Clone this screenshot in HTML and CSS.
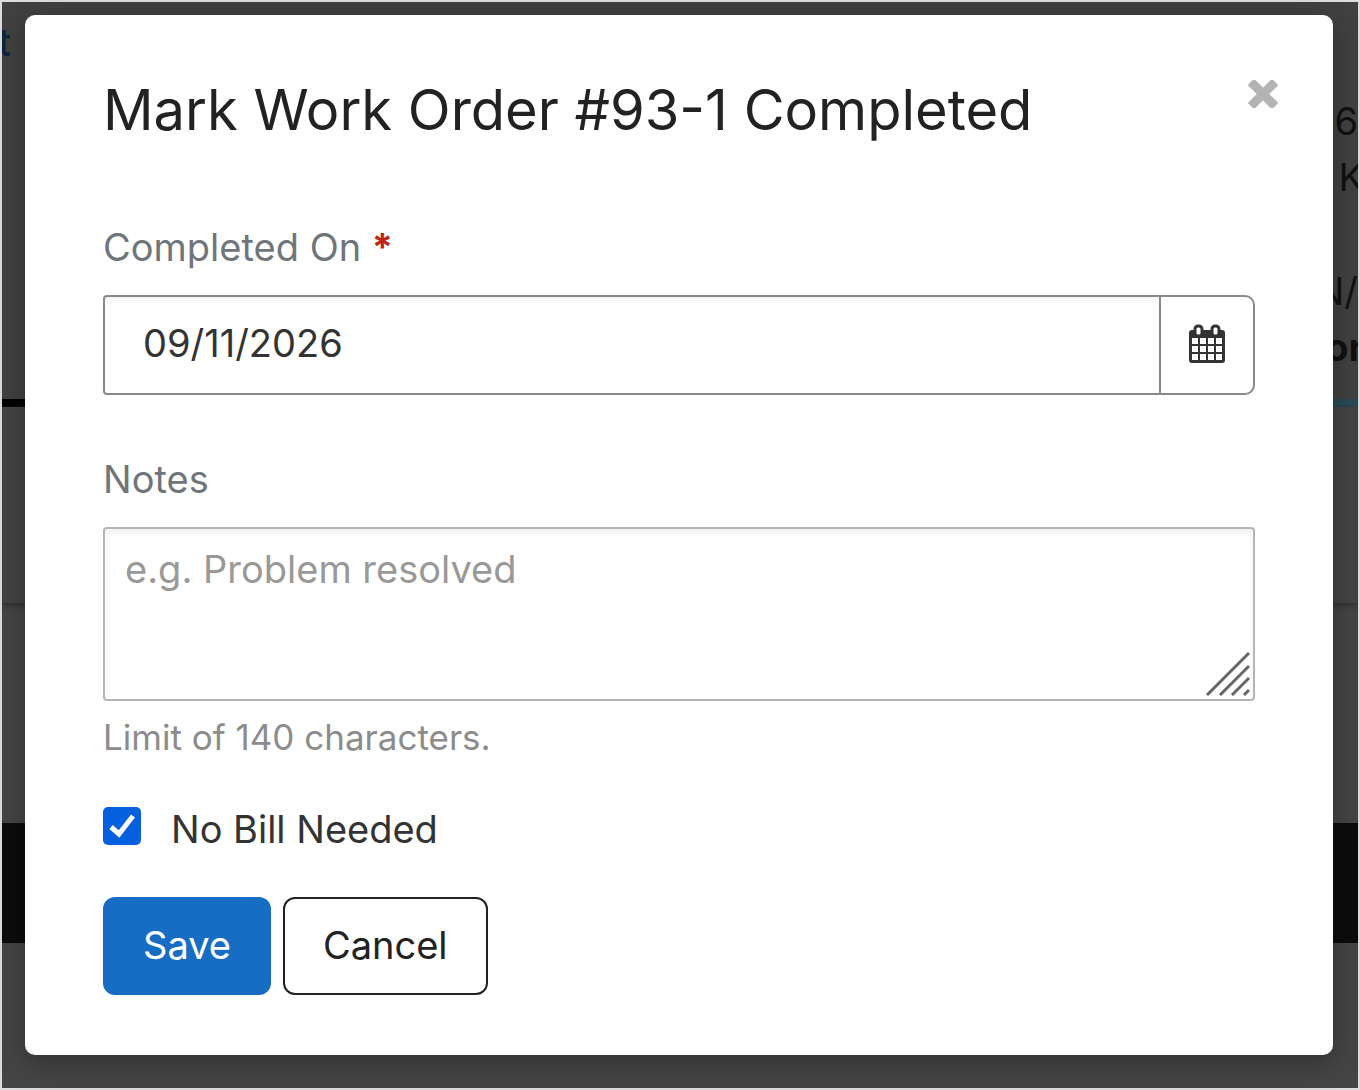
FILE: index.html
```html
<!DOCTYPE html>
<html lang="en">
<head>
<meta charset="utf-8">
<meta name="viewport" content="width=device-width, initial-scale=1">
<title>Mark Work Order #93-1 Completed</title>
<link rel="stylesheet" href="styles.css">
</head>
<body>
<div class="page">
  <div class="summary">
    <a class="summary-link" href="#">t</a>
    <div class="details">
      <span>6</span>
      <span class="cut">K</span>
      <span class="gap"></span>
      <span>N/</span>
      <strong class="cut">or</strong>
    </div>
  </div>
  <div class="rule"><span class="rule-dark"></span><span class="rule-teal"></span></div>
  <div class="panel"></div>
  <div class="blank"></div>
  <div class="footer-bar"></div>
</div>

<div class="overlay">
  <section class="modal" role="dialog" aria-labelledby="title">
    <header class="modal-header">
      <h1 class="title" id="title">Mark Work Order #93-1 Completed</h1>
      <button class="close" type="button" aria-label="Close">
        <svg width="30" height="28" viewBox="0 0 30 28"><path d="M6 5L24 23M24 5L6 23" stroke="#b3b3b3" stroke-width="9" stroke-linecap="square"/></svg>
      </button>
    </header>
    <form class="form">
      <label class="label" for="completed">Completed On <span class="required">*</span></label>
      <div class="date-group">
        <input class="date-input" id="completed" type="text" value="09/11/2026">
        <button class="date-button" type="button" aria-label="Open calendar">
          <svg width="36" height="40" viewBox="0 0 36 40">
            <rect x="0" y="6" width="36" height="33" rx="3" fill="#333"/>
            <g fill="#fff">
              <path d="M3 14h6v6H3zM11 14h6v6h-6zM19 14h6v6h-6zM27 14h6v6h-6z"/>
              <path d="M3 22h6v6H3zM11 22h6v6h-6zM19 22h6v6h-6zM27 22h6v6h-6z"/>
              <path d="M3 30h6v6H3zM11 30h6v6h-6zM19 30h6v6h-6zM27 30h6v6h-6z"/>
            </g>
            <g fill="#fff" stroke="#333" stroke-width="3">
              <rect x="6" y="2" width="7" height="10" rx="3"/>
              <rect x="23" y="2" width="7" height="10" rx="3"/>
            </g>
          </svg>
        </button>
      </div>
      <label class="label" for="notes">Notes</label>
      <div class="notes-group">
        <textarea class="notes" id="notes" placeholder="e.g. Problem resolved"></textarea>
        <svg class="grip" width="44" height="44" viewBox="0 0 44 44"><path d="M1 43L43 1M14 43L43 14M26 43L43 26M38 43L43 38" stroke="#666" stroke-width="3"/></svg>
      </div>
      <p class="hint">Limit of 140 characters.</p>
      <label class="check-row">
        <span class="check-wrap">
          <input class="check" type="checkbox" checked>
          <svg class="tick" width="38" height="38" viewBox="0 0 38 38"><path d="M8 20L16 27L30 9" fill="none" stroke="#fff" stroke-width="5"/></svg>
        </span>
        <span>No Bill Needed</span>
      </label>
      <div class="actions">
        <button class="button save" type="button">Save</button>
        <button class="button cancel" type="button">Cancel</button>
      </div>
    </form>
  </section>
</div>
</body>
</html>
```
FILE: styles.css
```css
* {
  box-sizing: border-box;
}

body {
  margin: 0;
  font-family: Inter, "Liberation Sans", sans-serif;
  font-size: 38px;
  line-height: 56px;
  color: #333;
}

button,
input,
textarea {
  font: inherit;
  color: inherit;
}

/* Dimmed page behind the dialog */
.page {
  display: flex;
  flex-direction: column;
  min-height: 100vh;
  overflow: hidden;
  border: 2px solid #dcdcdc;
  background: #454545;
}

.summary {
  display: flex;
  justify-content: space-between;
  height: 397px;
  padding-top: 12px;
  background: #414141;
}

.summary-link {
  margin-left: -4px;
  font-weight: 500;
  color: #10233f;
  text-decoration: none;
}

.details {
  display: flex;
  flex-direction: column;
  align-items: flex-end;
  padding-top: 79px;
  color: #111;
}

.cut {
  margin-right: -6px;
}

.gap {
  height: 58px;
}

.rule {
  display: flex;
  height: 8px;
}

.rule-dark,
.rule-teal {
  flex: 1;
}

.rule-dark {
  background: #000;
}

.rule-teal {
  background: #2a4c56;
}

.panel {
  height: 196px;
  background: #444;
  box-shadow: 0 2px 6px #2b2b2b;
}

.blank {
  height: 220px;
}

.footer-bar {
  height: 120px;
  background: #0c0c0c;
}

/* Dialog */
.overlay {
  position: absolute;
  inset: 0;
  padding: 15px 27px 35px 25px;
}

.modal {
  padding: 61px 78px 60px;
  border-radius: 10px;
  background: #fff;
  box-shadow: 0 8px 30px rgba(0, 0, 0, 0.3);
}

.modal-header {
  display: flex;
  align-items: flex-start;
  justify-content: space-between;
  margin-right: -23px;
}

.title {
  margin: 0;
  font-size: 56px;
  font-weight: 400;
  line-height: 68px;
  color: #222;
}

.close {
  display: flex;
  margin: 4px 0 0;
  padding: 0;
  border: 0;
  background: none;
}

.form {
  display: flex;
  flex-direction: column;
  padding-top: 75px;
}

.label {
  color: #70757a;
}

.required {
  font-weight: 700;
  color: #bd2413;
}

.date-group {
  display: flex;
  height: 100px;
  margin: 20px 0 56px;
  border: 2px solid #8a8a8a;
  border-radius: 4px 10px 10px 4px;
}

.date-input {
  flex: 1;
  min-width: 0;
  padding: 0 38px 4px;
  border: 0;
  background: none;
  box-shadow: inset 0 4px 6px rgba(0, 0, 0, 0.04);
}

.date-button {
  display: flex;
  align-items: center;
  justify-content: center;
  width: 94px;
  padding: 0 0 2px;
  border: 0;
  border-left: 2px solid #8a8a8a;
  background: none;
}

.notes-group {
  position: relative;
  display: flex;
  margin-top: 20px;
}

.notes {
  width: 100%;
  height: 174px;
  padding: 12px 20px;
  border: 2px solid #b5b5b5;
  border-radius: 4px;
  background: none;
  box-shadow: inset 0 4px 6px rgba(0, 0, 0, 0.06);
  resize: none;
}

.notes::placeholder {
  color: #999;
  opacity: 1;
}

.grip {
  position: absolute;
  right: 5px;
  bottom: 5px;
}

.hint {
  margin: 8px 0 0;
  font-size: 35px;
  color: #8c8c8c;
}

.check-row {
  display: flex;
  align-items: center;
  gap: 30px;
  margin-top: 36px;
}

.check-wrap {
  position: relative;
  display: flex;
  margin-bottom: 6px;
}

.check {
  width: 38px;
  height: 38px;
  margin: 0;
  border-radius: 5px;
  background: #0560df;
  appearance: none;
}

.tick {
  position: absolute;
  inset: 0;
  pointer-events: none;
}

.check:not(:checked) + .tick {
  display: none;
}

.actions {
  display: flex;
  gap: 12px;
  margin-top: 40px;
}

.button {
  height: 98px;
  padding: 0 38px 2px;
  border: 2px solid #222;
  border-radius: 12px;
  background: #fff;
  color: #222;
}

.save {
  border-color: #176dc4;
  background: #176dc4;
  color: #fff;
}
```
